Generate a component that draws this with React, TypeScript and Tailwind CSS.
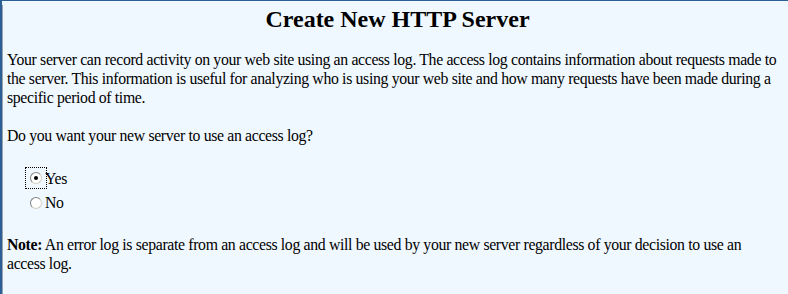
import React from 'react'

const Radio = ({checked}: {checked?: boolean}) => (
  <span className="inline-block w-[12px] h-[12px] rounded-full border border-t-[#808080] border-l-[#808080] border-r-[#d4d0c8] border-b-[#d4d0c8] bg-white relative">
    {checked && <span className="absolute left-[3px] top-[3px] w-[4px] h-[4px] rounded-full bg-black" />}
  </span>
)

const App = () => {
  return (
    <main className="w-[788px] h-[294px] bg-[#f0f8ff] border-t border-t-[#2c5f95] border-l-2 border-l-[#2c5f95] overflow-hidden font-['Liberation_Serif',serif] text-black">
      <div className="h-full border-l border-l-[#9aa4b0] pl-[4px]">
        <h1 className="text-[24px] font-bold text-center leading-[28px] mt-[4px]">Create New HTTP Server</h1>
        <div className="text-[15.8px] leading-[19px] tracking-[-0.35px]">
          <p className="mt-[17px] whitespace-nowrap">
            Your server can record activity on your web site using an access log. The access log contains information about requests made to<br />
            the server. This information is useful for analyzing who is using your web site and how many requests have been made during a<br />
            specific period of time.
          </p>
          <p className="mt-[19px]">Do you want your new server to use an access log?</p>
          <div className="mt-[22px] ml-[23px] flex flex-col gap-[4px]">
            <label className="flex items-center">
              <span className="flex items-center px-[4px] py-[4px] border border-dotted border-black -ml-[5px]">
                <Radio checked />
              </span>
              <span className="-ml-[2px]">Yes</span>
            </label>
            <label className="flex items-center">
              <Radio />
              <span className="ml-[3px]">No</span>
            </label>
          </div>
          <p className="mt-[23px] whitespace-nowrap">
            <b>Note:</b> An error log is separate from an access log and will be used by your new server regardless of your decision to use an<br />
            access log.
          </p>
        </div>
      </div>
    </main>
  )
}

export default App
